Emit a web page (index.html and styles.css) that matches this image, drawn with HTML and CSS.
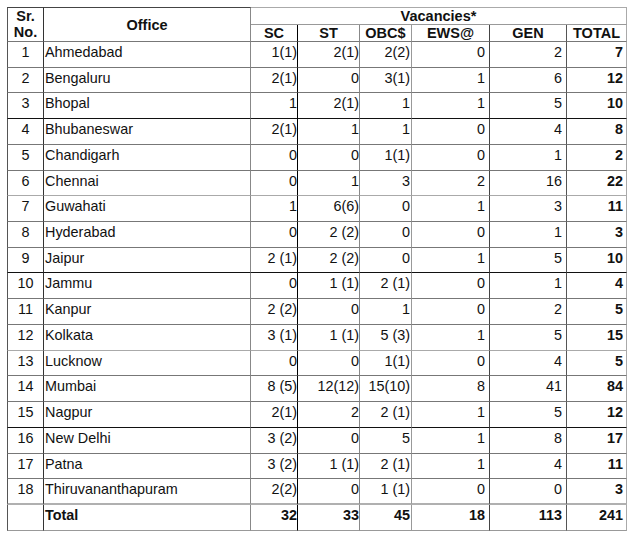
FILE: index.html
```html
<!DOCTYPE html>
<html lang="en">
<head>
<meta charset="utf-8">
<title>Vacancies</title>
<link rel="stylesheet" href="styles.css">
</head>
<body>
<div class="page">
<table class="vac">
  <colgroup>
    <col class="c-sr"><col class="c-off"><col class="c-sc"><col class="c-st"><col class="c-obc"><col class="c-ews"><col class="c-gen"><col class="c-tot">
  </colgroup>
  <thead>
    <tr class="h1">
      <th rowspan="2" class="sr">Sr.<br>No.</th>
      <th rowspan="2" class="off">Office</th>
      <th colspan="6" class="vacs">Vacancies*</th>
    </tr>
    <tr class="h2">
      <th>SC</th><th>ST</th><th>OBC$</th><th>EWS@</th><th>GEN</th><th>TOTAL</th>
    </tr>
  </thead>
  <tbody>
    <tr><td>1</td><td>Ahmedabad</td><td>1(1)</td><td>2(1)</td><td>2(2)</td><td>0</td><td>2</td><td>7</td></tr>
    <tr><td>2</td><td>Bengaluru</td><td>2(1)</td><td>0</td><td>3(1)</td><td>1</td><td>6</td><td>12</td></tr>
    <tr class="dk"><td>3</td><td>Bhopal</td><td>1</td><td>2(1)</td><td>1</td><td>1</td><td>5</td><td>10</td></tr>
    <tr><td>4</td><td>Bhubaneswar</td><td>2(1)</td><td>1</td><td>1</td><td>0</td><td>4</td><td>8</td></tr>
    <tr><td>5</td><td>Chandigarh</td><td>0</td><td>0</td><td>1(1)</td><td>0</td><td>1</td><td>2</td></tr>
    <tr class="lt"><td>6</td><td>Chennai</td><td>0</td><td>1</td><td>3</td><td>2</td><td>16</td><td>22</td></tr>
    <tr><td>7</td><td>Guwahati</td><td>1</td><td>6(6)</td><td>0</td><td>1</td><td>3</td><td>11</td></tr>
    <tr><td>8</td><td>Hyderabad</td><td>0</td><td>2 (2)</td><td>0</td><td>0</td><td>1</td><td>3</td></tr>
    <tr class="dk"><td>9</td><td>Jaipur</td><td>2 (1)</td><td>2 (2)</td><td>0</td><td>1</td><td>5</td><td>10</td></tr>
    <tr><td>10</td><td>Jammu</td><td>0</td><td>1 (1)</td><td>2 (1)</td><td>0</td><td>1</td><td>4</td></tr>
    <tr><td>11</td><td>Kanpur</td><td>2 (2)</td><td>0</td><td>1</td><td>0</td><td>2</td><td>5</td></tr>
    <tr class="lt"><td>12</td><td>Kolkata</td><td>3 (1)</td><td>1 (1)</td><td>5 (3)</td><td>1</td><td>5</td><td>15</td></tr>
    <tr><td>13</td><td>Lucknow</td><td>0</td><td>0</td><td>1(1)</td><td>0</td><td>4</td><td>5</td></tr>
    <tr><td>14</td><td>Mumbai</td><td>8 (5)</td><td>12(12)</td><td>15(10)</td><td>8</td><td>41</td><td>84</td></tr>
    <tr class="dk"><td>15</td><td>Nagpur</td><td>2(1)</td><td>2</td><td>2 (1)</td><td>1</td><td>5</td><td>12</td></tr>
    <tr><td>16</td><td>New Delhi</td><td>3 (2)</td><td>0</td><td>5</td><td>1</td><td>8</td><td>17</td></tr>
    <tr><td>17</td><td>Patna</td><td>3 (2)</td><td>1 (1)</td><td>2 (1)</td><td>1</td><td>4</td><td>11</td></tr>
    <tr class="lt2"><td>18</td><td>Thiruvananthapuram</td><td>2(2)</td><td>0</td><td>1 (1)</td><td>0</td><td>0</td><td>3</td></tr>
    <tr class="total"><td></td><td>Total</td><td>32</td><td>33</td><td>45</td><td>18</td><td>113</td><td>241</td></tr>
  </tbody>
</table>
</div>
</body>
</html>
```

FILE: styles.css
```css
html, body {
  margin: 0;
  padding: 0;
  background: #ffffff;
}

.page {
  padding: 7px 0 0 7px;
}

.vac {
  table-layout: fixed;
  width: 620px;
  border-collapse: separate;
  border-spacing: 0;
  font-family: "Liberation Sans", Arial, sans-serif;
  font-size: 14.4px;
  color: #111;
}

.c-sr { width: 37px; }
.c-off { width: 207px; }
.c-sc { width: 47px; }
.c-st { width: 62px; }
.c-obc { width: 52px; }
.c-ews { width: 78px; }
.c-gen { width: 77px; }
.c-tot { width: 60px; }

.vac th,
.vac td {
  padding: 0;
  border-right: 1px solid #888;
  border-bottom: 1px solid #777;
  overflow: hidden;
  white-space: nowrap;
}

.vac th {
  font-weight: bold;
  font-size: 14.5px;
  text-align: center;
  line-height: 16px;
}

/* header */
.h1 { height: 18px; }
.h2 { height: 17px; }

.h1 th { border-top: 1px solid #444; vertical-align: top; }
.h1 .sr {
  border-left: 1px solid #555;
  border-right-color: #333;
  line-height: 16px;
  vertical-align: middle;
  padding-bottom: 1px;
}
.h1 .off { vertical-align: middle; border-right-color: #888; }
.h1 .vacs {
  border-top-color: #aaa;
  border-right-color: #aaa;
  border-bottom-color: #999;
}

.h2 th { vertical-align: top; }
.h2 th:nth-child(1) { border-right-color: #000; }
.h2 th:nth-child(2) { border-right-color: #888; }
.h2 th:nth-child(3) { border-right-color: #999; }
.h2 th:nth-child(4) { border-right-color: #444; }
.h2 th:nth-child(5) { border-right-color: #555; }
.h2 th:nth-child(6) { border-right-color: #aaa; }

/* body */
.vac tbody tr { height: 25.72px; }
.vac tbody tr.total { height: 26px; }

.vac td {
  vertical-align: top;
  padding-top: 2px;
  line-height: 17px;
  text-align: right;
}

.vac td:nth-child(1) {
  text-align: center;
  border-left: 1px solid #555;
  border-right-color: #333;
}
.vac td:nth-child(2) {
  text-align: left;
  padding-left: 1px;
  border-right-color: #888;
}
.vac td:nth-child(3) { border-right-color: #000; padding-right: 0; }
.vac td:nth-child(4) { border-right-color: #888; padding-right: 0; }
.vac td:nth-child(5) { border-right-color: #999; padding-right: 1px; }
.vac td:nth-child(6) { border-right-color: #444; padding-right: 4px; }
.vac td:nth-child(7) { border-right-color: #555; padding-right: 4px; }
.vac td:nth-child(8) { border-right-color: #aaa; padding-right: 3px; font-weight: bold; }

.vac tr.dk td { border-bottom-color: #111; }
.vac tr.lt td { border-bottom-color: #aaa; }
.vac tr.lt2 td { border-bottom: 2px solid #b0b0b0; }

.vac tr.total td {
  font-weight: bold;
  border-bottom-color: #999;
}
```
